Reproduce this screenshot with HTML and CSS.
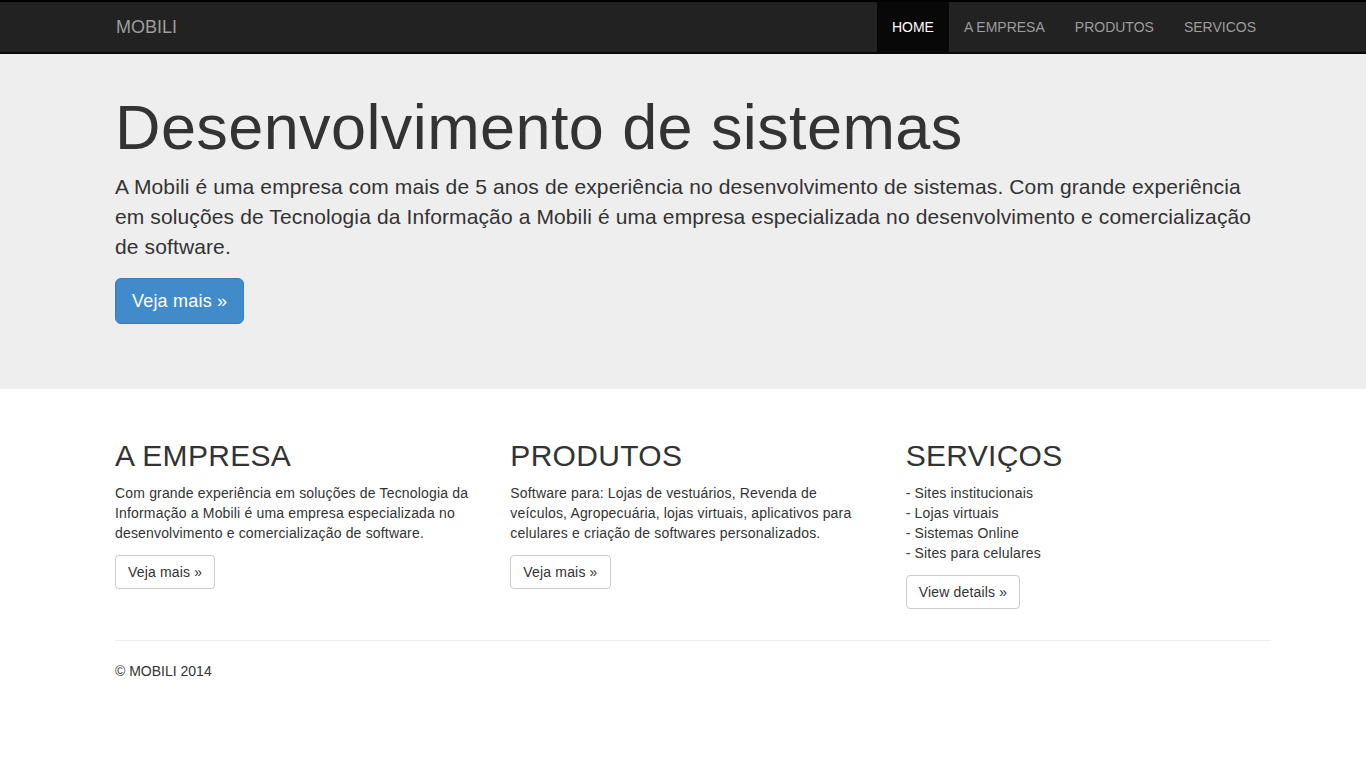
FILE: index.html
```
<!DOCTYPE html>
<html lang="pt-BR">
<head>
<meta charset="utf-8">
<title>Mobili</title>
<link rel="stylesheet" href="styles.css">
</head>
<body>
<header class="navbar">
  <div class="container nav-inner">
    <a class="brand" href="#">MOBILI</a>
    <nav class="nav">
      <a class="nav-link active" href="#">HOME</a>
      <a class="nav-link" href="#">A EMPRESA</a>
      <a class="nav-link" href="#">PRODUTOS</a>
      <a class="nav-link" href="#">SERVICOS</a>
    </nav>
  </div>
</header>

<section class="jumbotron">
  <div class="container">
    <h1 class="jumbo-title">Desenvolvimento de sistemas</h1>
    <p class="jumbo-text">A Mobili é uma empresa com mais de 5 anos de experiência no desenvolvimento de sistemas. Com grande experiência em soluções de Tecnologia da Informação a Mobili é uma empresa especializada no desenvolvimento e comercialização de software.</p>
    <div class="btn-row"><a class="btn btn-primary" href="#">Veja mais &raquo;</a></div>
  </div>
</section>

<main class="container">
  <div class="row">
    <div class="col">
      <h2 class="col-title">A EMPRESA</h2>
      <p class="col-text">Com grande experiência em soluções de Tecnologia da Informação a Mobili é uma empresa especializada no desenvolvimento e comercialização de software.</p>
      <div class="btn-row"><a class="btn btn-default" href="#">Veja mais &raquo;</a></div>
    </div>
    <div class="col">
      <h2 class="col-title">PRODUTOS</h2>
      <p class="col-text">Software para: Lojas de vestuários, Revenda de veículos, Agropecuária, lojas virtuais, aplicativos para celulares e criação de softwares personalizados.</p>
      <div class="btn-row"><a class="btn btn-default" href="#">Veja mais &raquo;</a></div>
    </div>
    <div class="col">
      <h2 class="col-title">SERVIÇOS</h2>
      <p class="col-text">- Sites institucionais<br>- Lojas virtuais<br>- Sistemas Online<br>- Sites para celulares</p>
      <div class="btn-row"><a class="btn btn-default" href="#">View details &raquo;</a></div>
    </div>
  </div>
  <hr class="divider">
  <footer class="footer">
    <p>&copy; MOBILI 2014</p>
  </footer>
</main>
</body>
</html>
```

FILE: styles.css
```
* {
  box-sizing: border-box;
}

html, body {
  margin: 0;
  padding: 0;
  background: #fff;
}

body {
  font-family: "Liberation Sans", Arial, Helvetica, sans-serif;
  font-size: 14px;
  line-height: 20px;
  color: #333;
}

a {
  text-decoration: none;
}

.container {
  width: 1156px;
  margin-left: 115px;
}

/* Navbar */
.navbar {
  background: #222;
  border-top: 2px solid #000;
  border-bottom: 2px solid #080808;
  height: 54px;
}

.nav-inner {
  display: flex;
  justify-content: space-between;
  align-items: stretch;
  height: 50px;
}

.brand {
  font-size: 18px;
  line-height: 20px;
  padding: 15px 0 15px 1px;
  color: #9d9d9d;
}

.nav {
  display: flex;
}

.nav-link {
  display: block;
  padding: 15px 15px;
  line-height: 20px;
  font-size: 14px;
  color: #9d9d9d;
}

.nav-link.active {
  background: #080808;
  color: #fff;
}

/* Jumbotron */
.jumbotron {
  background: #eee;
  padding: 39px 0 65px;
}

.jumbo-title {
  margin: 0 0 10px;
  font-size: 63px;
  line-height: 69px;
  font-weight: 400;
  letter-spacing: 0.4px;
  color: #333;
}

.jumbo-text {
  margin: 0;
  font-size: 21px;
  line-height: 30px;
  letter-spacing: 0.12px;
  color: #333;
}

.jumbotron .btn-row {
  margin-top: 16px;
}

.btn-row {
  display: flex;
}

.btn {
  display: block;
  border: 1px solid transparent;
  white-space: nowrap;
}

.btn-primary {
  background: #428bca;
  border-color: #357ebd;
  color: #fff;
  font-size: 18px;
  line-height: 24px;
  letter-spacing: 0.2px;
  padding: 10px 16px;
  border-radius: 6px;
}

.btn-default {
  background: #fff;
  border-color: #ccc;
  color: #333;
  font-size: 14px;
  line-height: 20px;
  letter-spacing: 0.17px;
  padding: 6px 12px;
  border-radius: 4px;
}

/* Columns */
.row {
  display: grid;
  grid-template-columns: repeat(3, 1fr);
  column-gap: 30px;
  padding-top: 50px;
}

.col-title {
  margin: 0 0 10px;
  font-size: 30px;
  line-height: 33px;
  font-weight: 400;
  letter-spacing: 0.3px;
  color: #333;
}

.col-text {
  margin: 0 0 12px;
  padding-top: 1px;
  letter-spacing: 0.17px;
}

.divider {
  margin: 31px 0 0;
  border: 0;
  border-top: 1px solid #eee;
  height: 0;
}

.footer p {
  margin: 20px 0 0;
}
```
